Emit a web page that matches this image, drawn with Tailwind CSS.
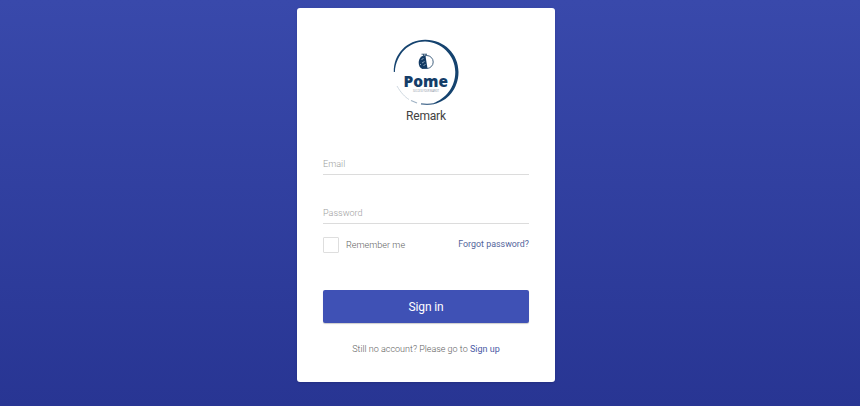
<!DOCTYPE html>
<html lang="en">
<head>
<meta charset="utf-8">
<title>Sign in</title>
<script src="https://cdn.jsdelivr.net/npm/@tailwindcss/browser@4"></script>
</head>
<body class="h-[406px] overflow-hidden bg-linear-to-b from-[#3949ab] to-[#283593] pl-[297px] pt-2 font-['Roboto',sans-serif]">
<main class="flex h-[374px] w-[258px] flex-col rounded-[3px] bg-white px-[26px] pt-[31px] shadow-sm">
  <div class="flex flex-col items-center">
    <svg class="block h-[66px] w-[66px]" viewBox="0 0 66 66" fill="none" role="img" aria-label="Pome">
      <!-- brushed ring, heavier on the right -->
      <path d="M.8 33C.5 15 14 1 32 .8C51 .5 65.500 15 65.500 33C65.500 50 54 62.500 41 65L40 64.300C52 60 62.200 49 62.300 33C62.300 16 48 2.800 32 2.500C16 2.500 3 15 1.900 33Z" fill="#15436f"/>
      <path d="M4 47C8 54 12 58 16 60.500" stroke="#c3ced8" stroke-width=".8"/>
      <path d="M18 61.500L24 64" stroke="#9fb2c4" stroke-width="1.200"/>
      <path d="M28 64.800C33 65.600 37 65.400 41 64.600" stroke="#4a6d90" stroke-width="1.200"/>
      <!-- fruit -->
      <circle cx="33.700" cy="23" r="6.500" stroke="#315374" stroke-width=".9"/>
      <path d="M30.500 16.500C24.500 18 24 28 29.500 30L34.500 29.500L32.500 17Z" fill="#123a63"/>
      <path d="M28.500 15.200H34M30.500 15V17.500M33 15V17" stroke="#315374" stroke-width=".9"/>
      <path d="M28.500 20.500L30.500 19.500M31.500 22.500L29 24M32.500 25L30.500 27M27 25L28 26" stroke="#a9bfd0" stroke-width=".8"/>
      <text x="32.700" y="47.800" text-anchor="middle" textLength="44.500" lengthAdjust="spacingAndGlyphs" font-family="Open Sans" font-size="16" font-weight="800" fill="#143d68">Pome</text>
      <text x="33" y="53.300" text-anchor="middle" textLength="26" lengthAdjust="spacingAndGlyphs" font-family="Open Sans" font-size="2.600" fill="#7f8d9c">SUCCESS YOUR MARKET</text>
    </svg>
    <h1 class="mt-[3px] text-[12px] leading-[16px] tracking-[-0.2px] text-[#424242]">Remark</h1>
  </div>
  <form>
    <input aria-label="Email" placeholder="Email" class="mt-[31px] block h-[20px] w-full border-b border-[#dcdcdc] pb-[2px] text-[9.100px] font-light outline-none placeholder:text-[#9e9e9e]">
    <input aria-label="Password" type="password" placeholder="Password" class="mt-[29px] block h-[20px] w-full border-b border-[#dcdcdc] pb-[2px] text-[9.100px] font-light outline-none placeholder:text-[#9e9e9e]">
    <div class="mt-[13px] flex h-[16px] items-center justify-between text-[9.100px] font-light">
      <label class="flex items-center gap-[7px] text-[#616161]"><span class="h-[16px] w-[16px] rounded-[1px] border border-[#dedede]"></span><span class="pt-px">Remember me</span></label>
      <a href="#" class="text-[8.900px] font-normal text-[#53649b]">Forgot password?</a>
    </div>
    <button type="button" class="mt-[37px] block h-[33px] w-full rounded-[2px] bg-[#3f51b5] text-[12px] tracking-[-0.15px] text-white shadow-[0_1px_1px_rgba(0,0,0,0.2)]">Sign in</button>
  </form>
  <p class="mt-[19px] whitespace-nowrap text-center text-[9px] font-light leading-[14px] text-[#616161]">Still no account? Please go to <a href="#" class="font-normal text-[#4b5aa5]">Sign up</a></p>
</main>
</body>
</html>
